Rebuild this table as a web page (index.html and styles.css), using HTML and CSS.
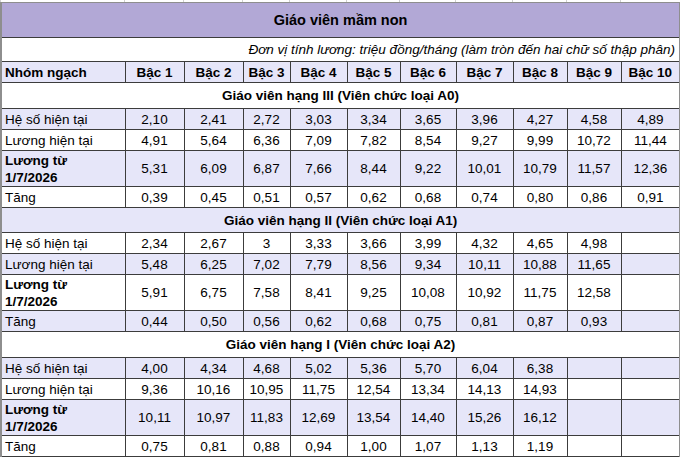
FILE: index.html
```html
<!DOCTYPE html>
<html lang="vi">
<head>
<meta charset="utf-8">
<title>Giáo viên mầm non</title>
<link rel="stylesheet" href="styles.css">
</head>
<body>
<div class="top-strip">
  <span></span><span></span><span></span><span></span><span></span><span></span><span></span><span></span><span></span><span></span><span></span>
</div>
<table class="salary">
  <colgroup>
    <col class="c-label"><col class="c1"><col class="c2"><col class="c3"><col class="c4"><col class="c5"><col class="c6"><col class="c7"><col class="c8"><col class="c9"><col class="c10">
  </colgroup>
  <tr class="title"><td colspan="11">Giáo viên mầm non</td></tr>
  <tr class="unit"><td colspan="11">Đơn vị tính lương: triệu đồng/tháng (làm tròn đến hai chữ số thập phân)</td></tr>
  <tr class="head lav">
    <td class="label">Nhóm ngạch</td><td>Bậc 1</td><td>Bậc 2</td><td>Bậc 3</td><td>Bậc 4</td><td>Bậc 5</td><td>Bậc 6</td><td>Bậc 7</td><td>Bậc 8</td><td>Bậc 9</td><td>Bậc 10</td>
  </tr>

  <tr class="section h27"><td colspan="11">Giáo viên hạng III (Viên chức loại A0)</td></tr>
  <tr class="row lav"><td class="label">Hệ số hiện tại</td><td>2,10</td><td>2,41</td><td>2,72</td><td>3,03</td><td>3,34</td><td>3,65</td><td>3,96</td><td>4,27</td><td>4,58</td><td>4,89</td></tr>
  <tr class="row"><td class="label">Lương hiện tại</td><td>4,91</td><td>5,64</td><td>6,36</td><td>7,09</td><td>7,82</td><td>8,54</td><td>9,27</td><td>9,99</td><td>10,72</td><td>11,44</td></tr>
  <tr class="row tall lav"><td class="label strong">Lương từ<br>1/7/2026</td><td>5,31</td><td>6,09</td><td>6,87</td><td>7,66</td><td>8,44</td><td>9,22</td><td>10,01</td><td>10,79</td><td>11,57</td><td>12,36</td></tr>
  <tr class="row"><td class="label">Tăng</td><td>0,39</td><td>0,45</td><td>0,51</td><td>0,57</td><td>0,62</td><td>0,68</td><td>0,74</td><td>0,80</td><td>0,86</td><td>0,91</td></tr>

  <tr class="section h25 lav"><td colspan="11">Giáo viên hạng II (Viên chức loại A1)</td></tr>
  <tr class="row"><td class="label">Hệ số hiện tại</td><td>2,34</td><td>2,67</td><td>3</td><td>3,33</td><td>3,66</td><td>3,99</td><td>4,32</td><td>4,65</td><td>4,98</td><td></td></tr>
  <tr class="row lav"><td class="label">Lương hiện tại</td><td>5,48</td><td>6,25</td><td>7,02</td><td>7,79</td><td>8,56</td><td>9,34</td><td>10,11</td><td>10,88</td><td>11,65</td><td></td></tr>
  <tr class="row tall"><td class="label strong">Lương từ<br>1/7/2026</td><td>5,91</td><td>6,75</td><td>7,58</td><td>8,41</td><td>9,25</td><td>10,08</td><td>10,92</td><td>11,75</td><td>12,58</td><td></td></tr>
  <tr class="row lav"><td class="label">Tăng</td><td>0,44</td><td>0,50</td><td>0,56</td><td>0,62</td><td>0,68</td><td>0,75</td><td>0,81</td><td>0,87</td><td>0,93</td><td></td></tr>

  <tr class="section h26"><td colspan="11">Giáo viên hạng I (Viên chức loại A2)</td></tr>
  <tr class="row lav"><td class="label">Hệ số hiện tại</td><td>4,00</td><td>4,34</td><td>4,68</td><td>5,02</td><td>5,36</td><td>5,70</td><td>6,04</td><td>6,38</td><td></td><td></td></tr>
  <tr class="row"><td class="label">Lương hiện tại</td><td>9,36</td><td>10,16</td><td>10,95</td><td>11,75</td><td>12,54</td><td>13,34</td><td>14,13</td><td>14,93</td><td></td><td></td></tr>
  <tr class="row tall lav"><td class="label strong">Lương từ<br>1/7/2026</td><td>10,11</td><td>10,97</td><td>11,83</td><td>12,69</td><td>13,54</td><td>14,40</td><td>15,26</td><td>16,12</td><td></td><td></td></tr>
  <tr class="row"><td class="label">Tăng</td><td>0,75</td><td>0,81</td><td>0,88</td><td>0,94</td><td>1,00</td><td>1,07</td><td>1,13</td><td>1,19</td><td></td><td></td></tr>
</table>
</body>
</html>
```

FILE: styles.css
```css
html, body {
  margin: 0;
  padding: 0;
  background: #ffffff;
}

body {
  width: 680px;
  font-family: "Liberation Sans", Arial, sans-serif;
  font-size: 13.5px;
  color: #000;
}

.top-strip {
  display: grid;
  grid-template-columns: 124px 59px 59px 47px 57px 53px 56px 57px 54px 54px 59px;
  width: 679px;
  height: 2px;
}

.top-strip span {
  border-left: 1px solid #d0d0d0;
}

.salary {
  width: 679px;
  border-collapse: collapse;
  table-layout: fixed;
}

.c-label { width: 124px; }
.c1 { width: 59px; }
.c2 { width: 59px; }
.c3 { width: 47px; }
.c4 { width: 57px; }
.c5 { width: 53px; }
.c6 { width: 56px; }
.c7 { width: 57px; }
.c8 { width: 54px; }
.c9 { width: 54px; }
.c10 { width: 59px; }

.salary td {
  border: 1px solid #3c3c3c;
  padding: 0 3px;
  text-align: center;
  vertical-align: middle;
  white-space: nowrap;
  line-height: 17px;
}

.salary tr td:first-child {
  border-left: 2px solid #8e8e8e;
}

.salary tr td:last-child {
  border-right: 2px solid #8e8e8e;
}

.title {
  height: 35px;
  background: #b2a8d6;
}

.title td {
  font-weight: bold;
  font-size: 14.5px;
  border-top: 1px solid #8e8e8e;
}

.unit {
  height: 24px;
}

.unit td {
  text-align: right;
  font-style: italic;
  padding-right: 4px;
}

.head {
  height: 21px;
}

.head td {
  font-weight: bold;
}

.lav {
  background: #e6e6f9;
}

.section td {
  font-weight: bold;
}

.h27 { height: 26px; }
.h25 { height: 25px; }
.h26 { height: 26px; }

.row { height: 21px; }
.row.tall { height: 36px; }

.salary td.label {
  text-align: left;
  padding-left: 3px;
}

.salary td.strong {
  font-weight: bold;
}
```
